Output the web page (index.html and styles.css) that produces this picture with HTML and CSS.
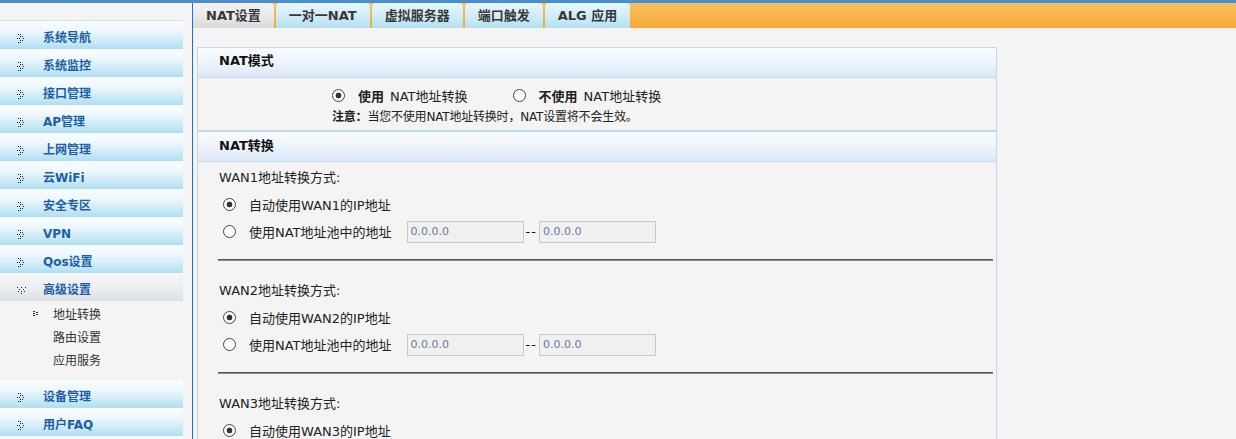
FILE: index.html
```html
<!DOCTYPE html>
<html lang="zh-CN">
<head>
<meta charset="utf-8">
<title>NAT设置</title>
<link rel="stylesheet" href="styles.css">
</head>
<body>
<div class="page">
  <aside class="sidebar">
    <ul class="menu">
      <li class="menu-item"><svg class="ico" viewBox="0 0 9 9"><g fill="#17213a"><rect x="1" y="0" width="1" height="1"/><rect x="3" y="0" width="1" height="1"/><rect x="3" y="2" width="1" height="1"/><rect x="5" y="2" width="1" height="1"/><rect x="0" y="4" width="1" height="1"/><rect x="2" y="4" width="1" height="1"/><rect x="6" y="4" width="1" height="1"/><rect x="3" y="6" width="1" height="1"/><rect x="5" y="6" width="1" height="1"/><rect x="1" y="8" width="1" height="1"/><rect x="3" y="8" width="1" height="1"/></g></svg><span>系统导航</span></li>
      <li class="menu-item"><svg class="ico" viewBox="0 0 9 9"><g fill="#17213a"><rect x="1" y="0" width="1" height="1"/><rect x="3" y="0" width="1" height="1"/><rect x="3" y="2" width="1" height="1"/><rect x="5" y="2" width="1" height="1"/><rect x="0" y="4" width="1" height="1"/><rect x="2" y="4" width="1" height="1"/><rect x="6" y="4" width="1" height="1"/><rect x="3" y="6" width="1" height="1"/><rect x="5" y="6" width="1" height="1"/><rect x="1" y="8" width="1" height="1"/><rect x="3" y="8" width="1" height="1"/></g></svg><span>系统监控</span></li>
      <li class="menu-item"><svg class="ico" viewBox="0 0 9 9"><g fill="#17213a"><rect x="1" y="0" width="1" height="1"/><rect x="3" y="0" width="1" height="1"/><rect x="3" y="2" width="1" height="1"/><rect x="5" y="2" width="1" height="1"/><rect x="0" y="4" width="1" height="1"/><rect x="2" y="4" width="1" height="1"/><rect x="6" y="4" width="1" height="1"/><rect x="3" y="6" width="1" height="1"/><rect x="5" y="6" width="1" height="1"/><rect x="1" y="8" width="1" height="1"/><rect x="3" y="8" width="1" height="1"/></g></svg><span>接口管理</span></li>
      <li class="menu-item"><svg class="ico" viewBox="0 0 9 9"><g fill="#17213a"><rect x="1" y="0" width="1" height="1"/><rect x="3" y="0" width="1" height="1"/><rect x="3" y="2" width="1" height="1"/><rect x="5" y="2" width="1" height="1"/><rect x="0" y="4" width="1" height="1"/><rect x="2" y="4" width="1" height="1"/><rect x="6" y="4" width="1" height="1"/><rect x="3" y="6" width="1" height="1"/><rect x="5" y="6" width="1" height="1"/><rect x="1" y="8" width="1" height="1"/><rect x="3" y="8" width="1" height="1"/></g></svg><span>AP管理</span></li>
      <li class="menu-item"><svg class="ico" viewBox="0 0 9 9"><g fill="#17213a"><rect x="1" y="0" width="1" height="1"/><rect x="3" y="0" width="1" height="1"/><rect x="3" y="2" width="1" height="1"/><rect x="5" y="2" width="1" height="1"/><rect x="0" y="4" width="1" height="1"/><rect x="2" y="4" width="1" height="1"/><rect x="6" y="4" width="1" height="1"/><rect x="3" y="6" width="1" height="1"/><rect x="5" y="6" width="1" height="1"/><rect x="1" y="8" width="1" height="1"/><rect x="3" y="8" width="1" height="1"/></g></svg><span>上网管理</span></li>
      <li class="menu-item"><svg class="ico" viewBox="0 0 9 9"><g fill="#17213a"><rect x="1" y="0" width="1" height="1"/><rect x="3" y="0" width="1" height="1"/><rect x="3" y="2" width="1" height="1"/><rect x="5" y="2" width="1" height="1"/><rect x="0" y="4" width="1" height="1"/><rect x="2" y="4" width="1" height="1"/><rect x="6" y="4" width="1" height="1"/><rect x="3" y="6" width="1" height="1"/><rect x="5" y="6" width="1" height="1"/><rect x="1" y="8" width="1" height="1"/><rect x="3" y="8" width="1" height="1"/></g></svg><span>云WiFi</span></li>
      <li class="menu-item"><svg class="ico" viewBox="0 0 9 9"><g fill="#17213a"><rect x="1" y="0" width="1" height="1"/><rect x="3" y="0" width="1" height="1"/><rect x="3" y="2" width="1" height="1"/><rect x="5" y="2" width="1" height="1"/><rect x="0" y="4" width="1" height="1"/><rect x="2" y="4" width="1" height="1"/><rect x="6" y="4" width="1" height="1"/><rect x="3" y="6" width="1" height="1"/><rect x="5" y="6" width="1" height="1"/><rect x="1" y="8" width="1" height="1"/><rect x="3" y="8" width="1" height="1"/></g></svg><span>安全专区</span></li>
      <li class="menu-item"><svg class="ico" viewBox="0 0 9 9"><g fill="#17213a"><rect x="1" y="0" width="1" height="1"/><rect x="3" y="0" width="1" height="1"/><rect x="3" y="2" width="1" height="1"/><rect x="5" y="2" width="1" height="1"/><rect x="0" y="4" width="1" height="1"/><rect x="2" y="4" width="1" height="1"/><rect x="6" y="4" width="1" height="1"/><rect x="3" y="6" width="1" height="1"/><rect x="5" y="6" width="1" height="1"/><rect x="1" y="8" width="1" height="1"/><rect x="3" y="8" width="1" height="1"/></g></svg><span>VPN</span></li>
      <li class="menu-item"><svg class="ico" viewBox="0 0 9 9"><g fill="#17213a"><rect x="1" y="0" width="1" height="1"/><rect x="3" y="0" width="1" height="1"/><rect x="3" y="2" width="1" height="1"/><rect x="5" y="2" width="1" height="1"/><rect x="0" y="4" width="1" height="1"/><rect x="2" y="4" width="1" height="1"/><rect x="6" y="4" width="1" height="1"/><rect x="3" y="6" width="1" height="1"/><rect x="5" y="6" width="1" height="1"/><rect x="1" y="8" width="1" height="1"/><rect x="3" y="8" width="1" height="1"/></g></svg><span>Qos设置</span></li>
      <li class="menu-item open"><svg class="ico" viewBox="0 0 9 9"><g fill="#17213a"><rect x="0" y="1" width="1" height="1"/><rect x="4" y="1" width="1" height="1"/><rect x="8" y="1" width="1" height="1"/><rect x="2" y="3" width="1" height="1"/><rect x="6" y="3" width="1" height="1"/><rect x="1" y="5" width="1" height="1"/><rect x="4" y="5" width="1" height="1"/><rect x="7" y="5" width="1" height="1"/><rect x="4" y="7" width="1" height="1"/></g></svg><span>高级设置</span></li>
      <li class="submenu">
        <ul>
          <li class="sub-item active"><svg class="sub-ico" viewBox="0 0 6 5"><g fill="#2a3550"><rect x="0" y="0" width="2" height="1"/><rect x="0" y="2" width="2" height="1"/><rect x="3" y="1" width="2" height="1"/><rect x="3" y="3" width="2" height="1"/><rect x="0" y="4" width="2" height="1"/></g></svg><span>地址转换</span></li>
          <li class="sub-item">路由设置</li>
          <li class="sub-item">应用服务</li>
        </ul>
      </li>
      <li class="menu-item"><svg class="ico" viewBox="0 0 9 9"><g fill="#17213a"><rect x="1" y="0" width="1" height="1"/><rect x="3" y="0" width="1" height="1"/><rect x="3" y="2" width="1" height="1"/><rect x="5" y="2" width="1" height="1"/><rect x="0" y="4" width="1" height="1"/><rect x="2" y="4" width="1" height="1"/><rect x="6" y="4" width="1" height="1"/><rect x="3" y="6" width="1" height="1"/><rect x="5" y="6" width="1" height="1"/><rect x="1" y="8" width="1" height="1"/><rect x="3" y="8" width="1" height="1"/></g></svg><span>设备管理</span></li>
      <li class="menu-item"><svg class="ico" viewBox="0 0 9 9"><g fill="#17213a"><rect x="1" y="0" width="1" height="1"/><rect x="3" y="0" width="1" height="1"/><rect x="3" y="2" width="1" height="1"/><rect x="5" y="2" width="1" height="1"/><rect x="0" y="4" width="1" height="1"/><rect x="2" y="4" width="1" height="1"/><rect x="6" y="4" width="1" height="1"/><rect x="3" y="6" width="1" height="1"/><rect x="5" y="6" width="1" height="1"/><rect x="1" y="8" width="1" height="1"/><rect x="3" y="8" width="1" height="1"/></g></svg><span>用户FAQ</span></li>
      <li class="menu-item"></li>
    </ul>
  </aside>

  <main class="main">
    <nav class="tabs">
      <a class="tab active">NAT设置</a>
      <a class="tab">一对一NAT</a>
      <a class="tab">虚拟服务器</a>
      <a class="tab">端口触发</a>
      <a class="tab">ALG 应用</a>
    </nav>

    <section class="panel">
      <div class="panel-head">NAT模式</div>
      <div class="mode-body">
        <div class="opt-row">
          <label class="opt"><input class="radio" type="radio" name="mode" checked><b>使用</b>NAT地址转换</label>
          <label class="opt opt-gap"><input class="radio" type="radio" name="mode"><b>不使用</b>NAT地址转换</label>
        </div>
        <div class="notice"><b>注意：</b>当您不使用NAT地址转换时，NAT设置将不会生效。</div>
      </div>

      <div class="panel-head second">NAT转换</div>
      <div class="wan-body">
        <div class="wan-block">
          <div class="wan-title">WAN1地址转换方式:</div>
          <div class="wan-rows">
            <label class="wan-row"><input class="radio" type="radio" name="w1" checked>自动使用WAN1的IP地址</label>
            <label class="wan-row"><input class="radio" type="radio" name="w1">使用NAT地址池中的地址<input class="ip" type="text" value="0.0.0.0" disabled><span class="dash">--</span><input class="ip ip2" type="text" value="0.0.0.0" disabled></label>
          </div>
          <div class="sep"></div>
        </div>
        <div class="wan-block">
          <div class="wan-title">WAN2地址转换方式:</div>
          <div class="wan-rows">
            <label class="wan-row"><input class="radio" type="radio" name="w2" checked>自动使用WAN2的IP地址</label>
            <label class="wan-row"><input class="radio" type="radio" name="w2">使用NAT地址池中的地址<input class="ip" type="text" value="0.0.0.0" disabled><span class="dash">--</span><input class="ip ip2" type="text" value="0.0.0.0" disabled></label>
          </div>
          <div class="sep"></div>
        </div>
        <div class="wan-block">
          <div class="wan-title">WAN3地址转换方式:</div>
          <div class="wan-rows">
            <label class="wan-row"><input class="radio" type="radio" name="w3" checked>自动使用WAN3的IP地址</label>
            <label class="wan-row"><input class="radio" type="radio" name="w3">使用NAT地址池中的地址<input class="ip" type="text" value="0.0.0.0" disabled><span class="dash">--</span><input class="ip ip2" type="text" value="0.0.0.0" disabled></label>
          </div>
          <div class="sep"></div>
        </div>
      </div>
    </section>
  </main>
</div>
</body>
</html>
```

FILE: styles.css
```css
* { box-sizing: border-box; }

html, body {
  margin: 0;
  padding: 0;
  height: 100%;
  overflow: hidden;
}

body {
  background: #f4f4f4;
  font-family: "DejaVu Sans", "Noto Sans CJK SC", sans-serif;
  font-size: 13px;
  color: #222;
}

.page {
  display: flex;
  height: 100%;
  border-top: 3px solid #4a8fcb;
}

/* ---------- sidebar ---------- */
.sidebar {
  flex: none;
  width: 193px;
  border-right: 1px solid #1d6fe0;
  padding-top: 17px;
}

.menu {
  list-style: none;
  margin: 0;
  padding: 0;
  width: 183px;
  border-top: 1px solid #cfe3f1;
}

.menu-item {
  height: 28px;
  display: flex;
  align-items: center;
  padding: 7px 0 0 17px;
  background: linear-gradient(#fafdff 0%, #eef8fd 35%, #c9e9f7 75%, #afdef3 100%);
  font-size: 12px;
  font-weight: bold;
  line-height: 21px;
  color: #1d5ea8;
}

.menu-item.open {
  background: linear-gradient(#f4f6f8 0%, #eceff2 50%, #dcdfe3 100%);
}

.ico {
  flex: none;
  width: 9px;
  height: 9px;
  margin-right: 17px;
}

.submenu ul {
  list-style: none;
  margin: 0;
  padding: 1px 0 9px;
}

.sub-item {
  height: 23px;
  display: flex;
  align-items: center;
  padding-left: 53px;
  font-size: 12px;
  color: #333;
}

.sub-item.active {
  padding-left: 33px;
}

.sub-ico {
  flex: none;
  width: 6px;
  height: 5px;
  margin-right: 14px;
}

/* ---------- main ---------- */
.main {
  flex: 1;
  min-width: 0;
}

.tabs {
  display: flex;
  height: 25px;
  background: linear-gradient(#f9c060 0%, #f7b54a 50%, #f6aa36 100%);
}

.tab {
  padding: 1px 13px 0;
  margin-right: 2px;
  line-height: 24px;
  font-size: 13px;
  font-weight: bold;
  color: #383838;
  background: linear-gradient(#e6f6fc 0%, #d4eef9 45%, #b4e0f3 100%);
  border-top-right-radius: 4px;
}

.tab + .tab { border-top-left-radius: 4px; }

.tab.active {
  background: linear-gradient(#f3f3f3 0%, #e9e9e9 55%, #d9d9d9 100%);
}

.panel {
  margin: 19px 0 0 4px;
  width: 800px;
  border: 1px solid #c5d9ee;
}

.panel-head {
  height: 30px;
  border-bottom: 1px solid #c5d9ee;
  background: linear-gradient(#f8fbff 0%, #eef4fd 50%, #dce8f9 100%);
  padding: 0 0 2px 21px;
  font-size: 13px;
  font-weight: bold;
  line-height: 26px;
  color: #111;
}

.panel-head.second {
  height: 32px;
  border-top: 2px solid #c5d9ee;
  line-height: 28px;
}

.mode-body {
  height: 52px;
  padding: 6px 0 0 134px;
}

.opt-row {
  display: flex;
  align-items: center;
  height: 22px;
}

.opt {
  display: flex;
  align-items: center;
}

.opt b { margin-right: 6px; }

.opt-gap { margin-left: 45px; }

.radio {
  appearance: none;
  -webkit-appearance: none;
  flex: none;
  width: 13px;
  height: 13px;
  margin: 0 13px 0 0;
  border: 1px solid #444;
  border-radius: 50%;
  background: #fff;
}

.radio:checked {
  background: radial-gradient(circle, #333 0, #333 2.6px, #fff 3.2px);
}

.notice {
  margin-top: 2px;
  line-height: 18px;
  font-size: 12px;
  letter-spacing: -0.2px;
}

.wan-body {
  padding: 6px 3px 0 20px;
}

.wan-title {
  height: 20px;
  line-height: 20px;
  padding-left: 1px;
}

.wan-rows { margin-top: 3px; }

.wan-row {
  display: flex;
  align-items: center;
  height: 27px;
}

.wan-row .radio { margin-left: 5px; }

.ip {
  width: 117px;
  height: 22px;
  margin: 0 0 0 15px;
  padding: 0 3px;
  border: 1px solid #c9c9c9;
  background: #f0f0f0;
  font-family: "DejaVu Sans", sans-serif;
  font-size: 11px;
  color: #6b7a99;
  opacity: 1;
}

.ip2 { margin-left: 0; }

.dash {
  margin: 0 2px 0 2px;
  letter-spacing: 1px;
  color: #111;
}

.sep {
  height: 2px;
  margin: 14px 0 20px;
  border-top: 1px solid #555;
  border-bottom: 1px solid #8c8c8c;
}
```
